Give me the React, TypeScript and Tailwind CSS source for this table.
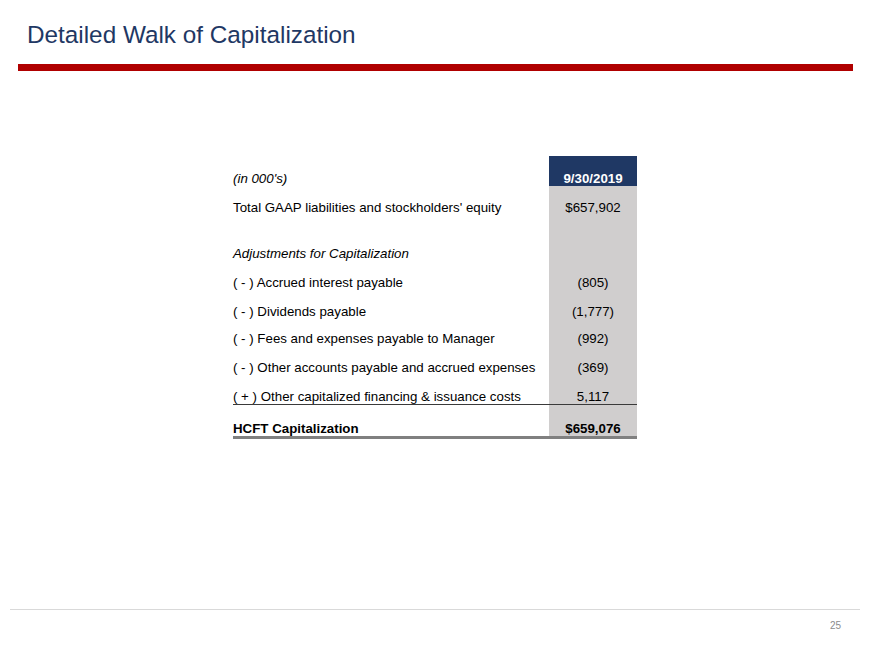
import React from "react";

const rows: { label: string; value: string; h: string; italic?: boolean; kind?: "under" | "total" }[] = [
  { label: "Total GAAP liabilities and stockholders' equity", value: "$657,902", h: "h-[29px]" },
  { label: "Adjustments for Capitalization", value: "", h: "h-[46px]", italic: true },
  { label: "( - ) Accrued interest payable", value: "(805)", h: "h-[29px]" },
  { label: "( - ) Dividends payable", value: "(1,777)", h: "h-[29px]" },
  { label: "( - ) Fees and expenses payable to Manager", value: "(992)", h: "h-[27px]" },
  { label: "( - ) Other accounts payable and accrued expenses", value: "(369)", h: "h-[29px]" },
  { label: "( + ) Other capitalized financing & issuance costs", value: "5,117", h: "h-[30px]", kind: "under" },
];

export default function App() {
  return (
    <div
      className="w-[870px] h-[652px] bg-white flex flex-col overflow-hidden"
      style={{ fontFamily: '"Liberation Sans", Arial, sans-serif' }}
    >
      <h1 className="mt-[22px] ml-[27px] text-[24.3px] leading-[26px] text-[#1f3864] font-normal">
        Detailed Walk of Capitalization
      </h1>
      <div className="mt-[16px] ml-[18px] w-[835px] h-[7px] bg-[#b00000]" />

      <div className="mt-[85px] ml-[233px] w-[404px] flex flex-col text-[13.3px] leading-[15px] text-black">
        <div className="flex h-[30px]">
          <div className="flex-1 flex items-end italic">(in 000's)</div>
          <div className="w-[88px] bg-[#1f3864] text-white font-bold flex items-end justify-center">9/30/2019</div>
        </div>
        {rows.map((r) => (
          <div
            key={r.label}
            className={`flex ${r.h} ${r.kind === "under" ? "border-b border-[#3a3a3a]" : ""}`}
          >
            <div className={`flex-1 flex items-end whitespace-nowrap ${r.italic ? "italic" : ""}`}>{r.label}</div>
            <div className="w-[88px] bg-[#d0cece] flex items-end justify-center">{r.value}</div>
          </div>
        ))}
        <div className="flex h-[34px] border-b-[3px] border-[#808080]">
          <div className="flex-1 flex items-end font-bold">HCFT Capitalization</div>
          <div className="w-[88px] bg-[#d0cece] flex items-end justify-center font-bold">$659,076</div>
        </div>
      </div>

      <div className="mt-[170px] ml-[10px] w-[850px] h-px bg-[#d9d9d9]" />
      <div className="mt-[10px] w-[841px] text-right text-[10px] leading-[12px] text-[#8c8c8c]">25</div>
    </div>
  );
}
